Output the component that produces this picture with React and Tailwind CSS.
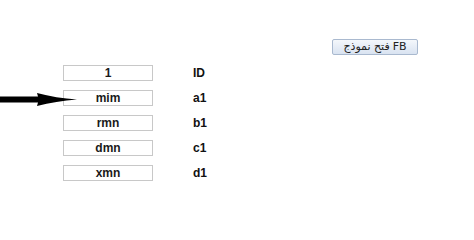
const rows = [
  { value: '1', label: 'ID' },
  { value: 'mim', label: 'a1' },
  { value: 'rmn', label: 'b1' },
  { value: 'dmn', label: 'c1' },
  { value: 'xmn', label: 'd1' },
]

function Arrow() {
  return (
    <svg width="78" height="14" viewBox="0 0 78 14" className="absolute left-0 top-[93px]">
      <path d="M0 3.5 H38 L37 0 Q56 5 77 6.5 Q56 8 37 13 L38 9.5 H0 Z" fill="#000" />
    </svg>
  )
}

export default function App() {
  return (
    <div dir="ltr" className="relative w-[474px] h-[228px] bg-white font-['Liberation_Sans',Arial,sans-serif]">
      <div className="flex justify-end pt-[39px] pr-[56px]">
        <button dir="ltr" className="w-[86px] h-[16px] border border-[#a9b9cf] rounded-[2px] bg-gradient-to-b from-[#f4f7fb] to-[#d9e3f1] text-[11px] leading-[14px] text-[#222] font-['DejaVu_Sans','Noto_Sans',sans-serif]">
          <div className="flex flex-row items-center justify-center gap-[3px]">
            <span className="order-1">{'\u0641\u062a\u062d \u0646\u0645\u0648\u0630\u062c'}</span>
            <span className="order-2">FB</span>
          </div>
        </button>
      </div>
      <div className="flex flex-col gap-[9px] mt-[10px] pl-[63px]">
        {rows.map((r) => (
          <div key={r.label} className="flex items-center h-[16px]">
            <div className="w-[90px] h-[16px] border border-[#c8c8c8] flex items-center justify-center text-[12px] leading-[14px] font-bold text-[#1a1a1a]">
              {r.value}
            </div>
            <span className="ml-[40px] text-[12px] leading-[14px] font-bold text-[#111]">{r.label}</span>
          </div>
        ))}
      </div>
      <Arrow />
    </div>
  )
}
